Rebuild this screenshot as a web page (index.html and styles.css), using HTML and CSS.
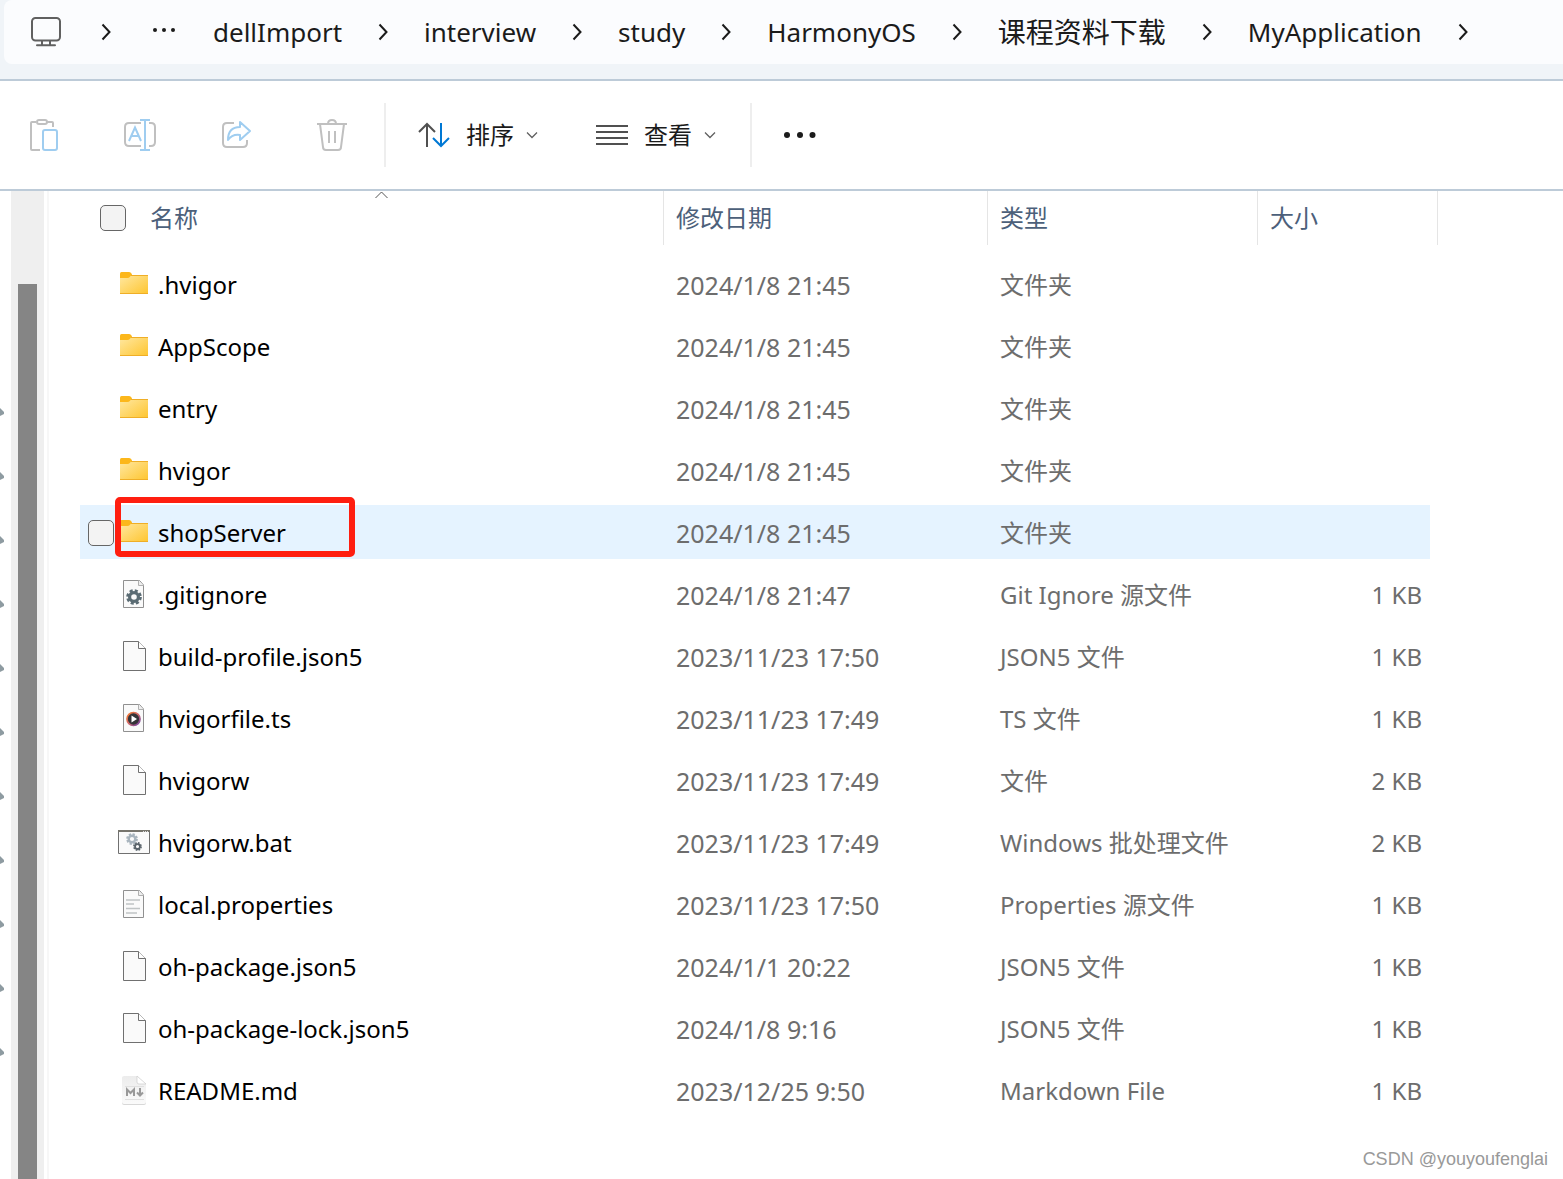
FILE: index.html
```html
<!DOCTYPE html>
<html lang="zh-CN">
<head>
<meta charset="utf-8">
<meta name="viewport" content="width=device-width, initial-scale=1">
<title>MyApplication</title>
<link rel="stylesheet" href="styles.css">
</head>
<body>
<svg class="sprite" aria-hidden="true">
  <defs>
    <linearGradient id="folder-fill" x1="0" y1="0" x2="1" y2="1"><stop offset="0" stop-color="#ffe8a2"/><stop offset="1" stop-color="#fec52f"/></linearGradient>
    <linearGradient id="media-ring" x1="0" y1="0" x2="1" y2="1"><stop offset="0" stop-color="#f47b2c"/><stop offset=".5" stop-color="#d0676b"/><stop offset="1" stop-color="#6a3fa8"/></linearGradient>
    <linearGradient id="md-fill" x1="0" y1="0" x2="0" y2="1"><stop offset="0" stop-color="#ececec"/><stop offset="1" stop-color="#fafafa"/></linearGradient>
  </defs>
  <symbol id="chevron" viewBox="0 0 10 18"><path d="M1.500 1.500 8.500 9 1.500 16.500" fill="none" stroke="#1b1b1b" stroke-width="2"/></symbol>
  <symbol id="caret" viewBox="0 0 12 8"><path d="M1 1.500 6 6.500 11 1.500" fill="none" stroke="#606060" stroke-width="1.300"/></symbol>
  <symbol id="folder" viewBox="0 0 32 32">
    <path d="M2 5.500q0-1.500 1.500-1.500H11q1 0 1.800.8L14 6.200V10H2z" fill="#fcb71b"/>
    <path d="M2 10h7.500q1.500 0 2.300-1L13.500 7H30v19H2z" fill="url(#folder-fill)"/>
    <path d="M13 7.500H30M2 25.500H30" stroke="#efae27" fill="none"/>
  </symbol>
  <symbol id="file" viewBox="0 0 32 32">
    <path d="M5.500 1.500H20.500L27.500 8.500V30.500H5.500z" fill="#fafafa" stroke="#707070"/>
    <path d="M20.500 1.500V8.500H27.500" fill="#fff" stroke="#707070"/>
  </symbol>
  <symbol id="small-file" viewBox="0 0 32 32">
    <path d="M5.500 2.500H21.500L25.500 7V29.500H5.500z" fill="#fafafa" stroke="#909090"/>
    <path d="M20.500 2.500V7.500H25.500" fill="#eee" stroke="#b0b0b0"/>
  </symbol>
  <symbol id="gear" viewBox="-10 -10 20 20">
    <g fill="none" stroke="currentColor"><circle r="5.500" stroke-width="4"/><circle r="8" stroke-width="3.600" stroke-dasharray="3.700 2.583"/></g>
  </symbol>
  <symbol id="config" viewBox="0 0 32 32"><use href="#small-file"/><use href="#gear" x="8" y="11" width="16" height="16" color="#5b6c74"/></symbol>
  <symbol id="media" viewBox="0 0 32 32"><use href="#small-file"/><circle cx="15.500" cy="17" r="6.500" fill="#343438" stroke="url(#media-ring)" stroke-width="1.700"/><path d="M13.500 13.500 19 17 13.500 20.500z" fill="#fff"/></symbol>
  <symbol id="batch" viewBox="0 0 32 32">
    <path d="M.5 4.500H31.500V27.500H.5z" fill="#fafafa" stroke="#707070"/><path d="M0 5H32" stroke="#77756d" stroke-width="2"/><path d="M25 5.500h5" stroke="#ddd" stroke-dasharray="1 1"/>
    <use href="#gear" x="8" y="7" width="12" height="12" color="#a9b5be"/><use href="#gear" x="15" y="16" width="9" height="9" color="#59636a"/>
  </symbol>
  <symbol id="text" viewBox="0 0 32 32"><use href="#small-file"/><path d="M8 12H22M8 16H16M8 20.500H22M8 25H19" stroke="#c0c4c5" stroke-width="1.500"/></symbol>
  <symbol id="markdown" viewBox="0 0 32 32">
    <path d="M6 3H19L28 11V29q0 2-2 2H6q-2 0-2-2V5q0-2 2-2z" fill="#d8d8d8"/>
    <path d="M6 2H19L28 10V28q0 2-2 2H6q-2 0-2-2V4q0-2 2-2z" fill="url(#md-fill)"/>
    <path d="M19 2V8q0 2 2 2H28z" fill="#fff" stroke="#ccc" stroke-width=".7"/><path d="M7 12.500H26M7 25.500H26" stroke="#e0e0e0"/>
    <path d="M9 22V15.500L12.500 19 16 15.500V22M22 14V21M19 18.500 22 21.500 25 18.500" fill="none" stroke="#999" stroke-width="2"/>
  </symbol>
  <symbol id="pin" viewBox="0 0 4 8"><path d="M0 0 3 3 4 4V6L2 7 0 8z" fill="#8e9ba1"/></symbol>
</svg>

<header class="address">
  <nav class="crumbs" aria-label="路径">
    <a class="crumb" href="#" aria-label="此电脑"><svg class="pc" viewBox="0 0 30 30"><g fill="none" stroke="#606060" stroke-width="2"><rect x="1" y="1" width="28" height="22.500" rx="3.500"/><path d="M11 24V28M19 24V28M6 28.300H24" stroke-linecap="round"/></g></svg></a>
    <svg class="chev"><use href="#chevron"/></svg>
    <button class="crumb more" type="button" aria-label="更多"><svg class="dots-s" viewBox="0 0 22 6"><g fill="#1b1b1b"><circle cx="2" cy="3" r="2"/><circle cx="11" cy="3" r="2"/><circle cx="20" cy="3" r="2"/></g></svg></button>
    <a class="crumb" href="#">dellImport</a>
    <svg class="chev"><use href="#chevron"/></svg>
    <a class="crumb" href="#">interview</a>
    <svg class="chev"><use href="#chevron"/></svg>
    <a class="crumb" href="#">study</a>
    <svg class="chev"><use href="#chevron"/></svg>
    <a class="crumb" href="#">HarmonyOS</a>
    <svg class="chev"><use href="#chevron"/></svg>
    <a class="crumb cjk" href="#">课程资料下载</a>
    <svg class="chev"><use href="#chevron"/></svg>
    <a class="crumb" href="#">MyApplication</a>
    <svg class="chev"><use href="#chevron"/></svg>
  </nav>
</header>

<div class="toolbar" role="toolbar">
  <div class="actions">
    <button type="button" class="tool" disabled aria-label="粘贴"><svg viewBox="0 0 32 34"><g fill="none" stroke="#c0c0c0" stroke-width="2"><path d="M8 4H4Q3 4 3 5V31Q3 32 4 32H12M18 4H24Q25 4 25 5V9"/><rect x="9" y="2" width="10" height="4" rx="2"/><rect x="15" y="12" width="14" height="20" rx="2" fill="#fff" stroke="#9fcdf0"/></g></svg></button>
    <button type="button" class="tool" disabled aria-label="重命名"><svg viewBox="0 0 32 34"><g fill="none" stroke="#c0c0c0" stroke-width="2"><path d="M17 5H5Q1 5 1 9V24Q1 28 5 28H17M25 5H27Q31 5 31 9V24Q31 28 27 28H25"/><path d="M5 23 11 9.500 17 23M7.500 18H14.500M16 2H26M16 32H26M21 2V32" stroke="#9fcdf0"/></g></svg></button>
    <button type="button" class="tool" disabled aria-label="共享"><svg viewBox="0 0 32 34"><g fill="none" stroke="#c0c0c0" stroke-width="2"><path d="M14 5H7Q3 5 3 9V25Q3 29 7 29H23Q27 29 27 25V22"/><path d="M20 4 30 13 20 22V17Q12 16 8 22Q8 9 20 9Z" stroke="#9fcdf0" stroke-linejoin="round"/></g></svg></button>
    <button type="button" class="tool" disabled aria-label="删除"><svg viewBox="0 0 32 34"><g fill="none" stroke="#c0c0c0" stroke-width="2"><path d="M1 6H31M4 6 7 29Q7 32 10 32H22Q25 32 25 29L28 6M12 6Q12 2 16 2Q20 2 20 6M13 13V25M19 13V25"/></g></svg></button>
  </div>
  <span class="rule"></span>
  <button type="button" class="menu"><svg class="glyph" viewBox="0 0 32 26"><g fill="none" stroke-width="2"><path d="M9 25V2M1 10 9 2 17 10" stroke="#505050"/><path d="M23 1V24M15 16 23 24 31 16" stroke="#0078d4"/></g></svg>排序<svg class="caret"><use href="#caret"/></svg></button>
  <button type="button" class="menu"><svg class="glyph" viewBox="0 0 32 26"><path d="M0 4H32M0 10H32M0 16H32M0 22H32" stroke="#505050" stroke-width="2"/></svg>查看<svg class="caret"><use href="#caret"/></svg></button>
  <span class="rule"></span>
  <button type="button" class="menu" aria-label="更多选项"><svg class="dots" viewBox="0 0 32 8"><g fill="#1b1b1b"><circle cx="3" cy="4" r="3"/><circle cx="16" cy="4" r="3"/><circle cx="28.500" cy="4" r="3"/></g></svg></button>
</div>

<div class="content">
  <aside class="pins" aria-hidden="true">
    <svg><use href="#pin"/></svg><svg><use href="#pin"/></svg><svg><use href="#pin"/></svg><svg><use href="#pin"/></svg><svg><use href="#pin"/></svg><svg><use href="#pin"/></svg><svg><use href="#pin"/></svg><svg><use href="#pin"/></svg><svg><use href="#pin"/></svg><svg><use href="#pin"/></svg><svg><use href="#pin"/></svg>
  </aside>
  <div class="track"><div class="thumb"></div></div>
  <main class="list">
    <table class="files">
      <colgroup><col><col class="c-date"><col class="c-type"><col class="c-size"></colgroup>
      <thead>
        <tr>
          <th scope="col"><div class="head first"><input type="checkbox" class="check" aria-label="全选">名称<svg class="sort" viewBox="0 0 13 8"><path d="M.5 7 6.500 1 12.500 7" fill="none" stroke="#555"/></svg></div></th>
          <th scope="col"><div class="head">修改日期</div></th>
          <th scope="col"><div class="head">类型</div></th>
          <th scope="col"><div class="head">大小</div></th>
        </tr>
      </thead>
      <tbody>
        <tr><td><div class="name"><svg><use href="#folder"/></svg>.hvigor</div></td><td class="date">2024/1/8 21:45</td><td>文件夹</td><td></td></tr>
        <tr><td><div class="name"><svg><use href="#folder"/></svg>AppScope</div></td><td class="date">2024/1/8 21:45</td><td>文件夹</td><td></td></tr>
        <tr><td><div class="name"><svg><use href="#folder"/></svg>entry</div></td><td class="date">2024/1/8 21:45</td><td>文件夹</td><td></td></tr>
        <tr><td><div class="name"><svg><use href="#folder"/></svg>hvigor</div></td><td class="date">2024/1/8 21:45</td><td>文件夹</td><td></td></tr>
        <tr class="hover"><td><div class="name"><input type="checkbox" class="check" aria-label="选择 shopServer"><svg><use href="#folder"/></svg>shopServer<span class="mark"></span></div></td><td class="date">2024/1/8 21:45</td><td>文件夹</td><td></td></tr>
        <tr><td><div class="name"><svg><use href="#config"/></svg>.gitignore</div></td><td class="date">2024/1/8 21:47</td><td>Git Ignore 源文件</td><td>1 KB</td></tr>
        <tr><td><div class="name"><svg><use href="#file"/></svg>build-profile.json5</div></td><td class="date">2023/11/23 17:50</td><td>JSON5 文件</td><td>1 KB</td></tr>
        <tr><td><div class="name"><svg><use href="#media"/></svg>hvigorfile.ts</div></td><td class="date">2023/11/23 17:49</td><td>TS 文件</td><td>1 KB</td></tr>
        <tr><td><div class="name"><svg><use href="#file"/></svg>hvigorw</div></td><td class="date">2023/11/23 17:49</td><td>文件</td><td>2 KB</td></tr>
        <tr><td><div class="name"><svg><use href="#batch"/></svg>hvigorw.bat</div></td><td class="date">2023/11/23 17:49</td><td>Windows 批处理文件</td><td>2 KB</td></tr>
        <tr><td><div class="name"><svg><use href="#text"/></svg>local.properties</div></td><td class="date">2023/11/23 17:50</td><td>Properties 源文件</td><td>1 KB</td></tr>
        <tr><td><div class="name"><svg><use href="#file"/></svg>oh-package.json5</div></td><td class="date">2024/1/1 20:22</td><td>JSON5 文件</td><td>1 KB</td></tr>
        <tr><td><div class="name"><svg><use href="#file"/></svg>oh-package-lock.json5</div></td><td class="date">2024/1/8 9:16</td><td>JSON5 文件</td><td>1 KB</td></tr>
        <tr><td><div class="name"><svg><use href="#markdown"/></svg>README.md</div></td><td class="date">2023/12/25 9:50</td><td>Markdown File</td><td>1 KB</td></tr>
      </tbody>
    </table>
  </main>
</div>
<div class="watermark">CSDN @youyoufenglai</div>
</body>
</html>
```
FILE: styles.css
```css
* { box-sizing: border-box; }

body {
  margin: 0;
  min-height: 100vh;
  display: flex;
  flex-direction: column;
  background: #fff;
  color: #000;
  font: 24px/32px "Noto Sans", "Noto Sans CJK SC", sans-serif;
}

button {
  margin: 0;
  padding: 0;
  border: 0;
  background: none;
  color: #1b1b1b;
  font: inherit;
}

svg { display: block; flex: none; }
.sprite { position: absolute; width: 0; height: 0; }

/* address bar */
.address {
  padding: 0 0 15px 4px;
  background: #f0f4f8;
  border-bottom: 2px solid #bdcbd8;
}
.crumbs {
  display: flex;
  align-items: center;
  gap: 36px;
  height: 64px;
  padding-left: 27px;
  overflow: hidden;
  background: #fbfcfe;
  border-radius: 8px 0 0 8px;
  font-size: 26px;
}
.crumb { color: #1b1b1b; text-decoration: none; white-space: nowrap; }
.crumb.cjk { font-size: 28px; }
.more { margin: 0 2px 4px 6px; }
.pc { width: 30px; height: 30px; margin-right: 4px; }
.chev { width: 10px; height: 18px; }
.dots-s { width: 22px; height: 6px; }

/* command bar */
.toolbar {
  display: flex;
  align-items: center;
  height: 110px;
  padding-left: 12px;
  border-bottom: 2px solid #bdcbd8;
}
.actions { display: flex; gap: 32px; margin-right: 20px; }
.tool { display: flex; justify-content: center; width: 64px; }
.tool svg { width: 32px; height: 34px; }
.rule { width: 2px; height: 64px; margin-right: 32px; background: #eee; }
.menu { display: flex; align-items: center; }
.glyph { width: 32px; height: 26px; margin-right: 16px; }
.caret { width: 12px; height: 8px; margin-left: 12px; }
.menu + .menu { margin-left: 58px; }
.menu + .rule { margin-left: 34px; }
.dots { width: 32px; height: 8px; }

/* navigation edge and scrollbar */
.content { display: flex; flex: 1; }
.pins {
  display: flex;
  flex-direction: column;
  gap: 56px;
  width: 11px;
  padding-top: 217px;
}
.pins svg { width: 4px; height: 8px; }
.track { display: flex; width: 33px; padding: 93px 7px 0; background: #efefef; }
.thumb { flex: 1; background: #858585; }

/* file list */
.list {
  flex: 1;
  margin-left: 3px;
  padding: 0 125px 56px 31px;
  border-left: 2px solid #f7f7f7;
}
.files {
  width: 100%;
  table-layout: fixed;
  border-spacing: 0;
  color: #6d6d6d;
}
.c-date { width: 324px; }
.c-type { width: 270px; }
.c-size { width: 180px; }

th { height: 62px; padding: 0; vertical-align: top; text-align: left; font-weight: 400; }
.head {
  position: relative;
  display: flex;
  align-items: center;
  height: 54px;
  padding-left: 12px;
  border-right: 1px solid #e5e5e5;
  color: #4c607a;
}
.head.first { gap: 24px; padding-left: 20px; }
.sort { position: absolute; top: 0; left: calc(50% + 3px); width: 13px; height: 8px; }

td {
  height: 62px;
  padding: 2px 0 0 12px;
  border: solid transparent;
  border-width: 4px 0;
  background-clip: padding-box;
  white-space: nowrap;
}
td:first-child { padding-left: 8px; }
td:last-child { padding-right: 8px; border-right-width: 8px; text-align: right; }
.date { font-size: 25px; }
.hover td { background-color: #e5f3ff; }

.name {
  position: relative;
  display: flex;
  align-items: center;
  height: 52px;
  padding-left: 30px;
  color: #000;
}
.name svg { width: 32px; height: 32px; margin: 0 8px 2px 0; }
.name .check { margin: 0 4px 0 -30px; }

.check {
  appearance: none;
  flex: none;
  width: 26px;
  height: 26px;
  margin: 0;
  border: 1px solid #666;
  border-radius: 5px;
  background: #f3f3f3;
}

.mark {
  position: absolute;
  top: -10px;
  left: 27px;
  width: 240px;
  height: 60px;
  border: 6px solid #ff1e10;
  border-radius: 5px;
}

.watermark {
  position: absolute;
  right: 15px;
  bottom: 8px;
  color: #999;
  font: 18px/24px "Liberation Sans", sans-serif;
}
```
